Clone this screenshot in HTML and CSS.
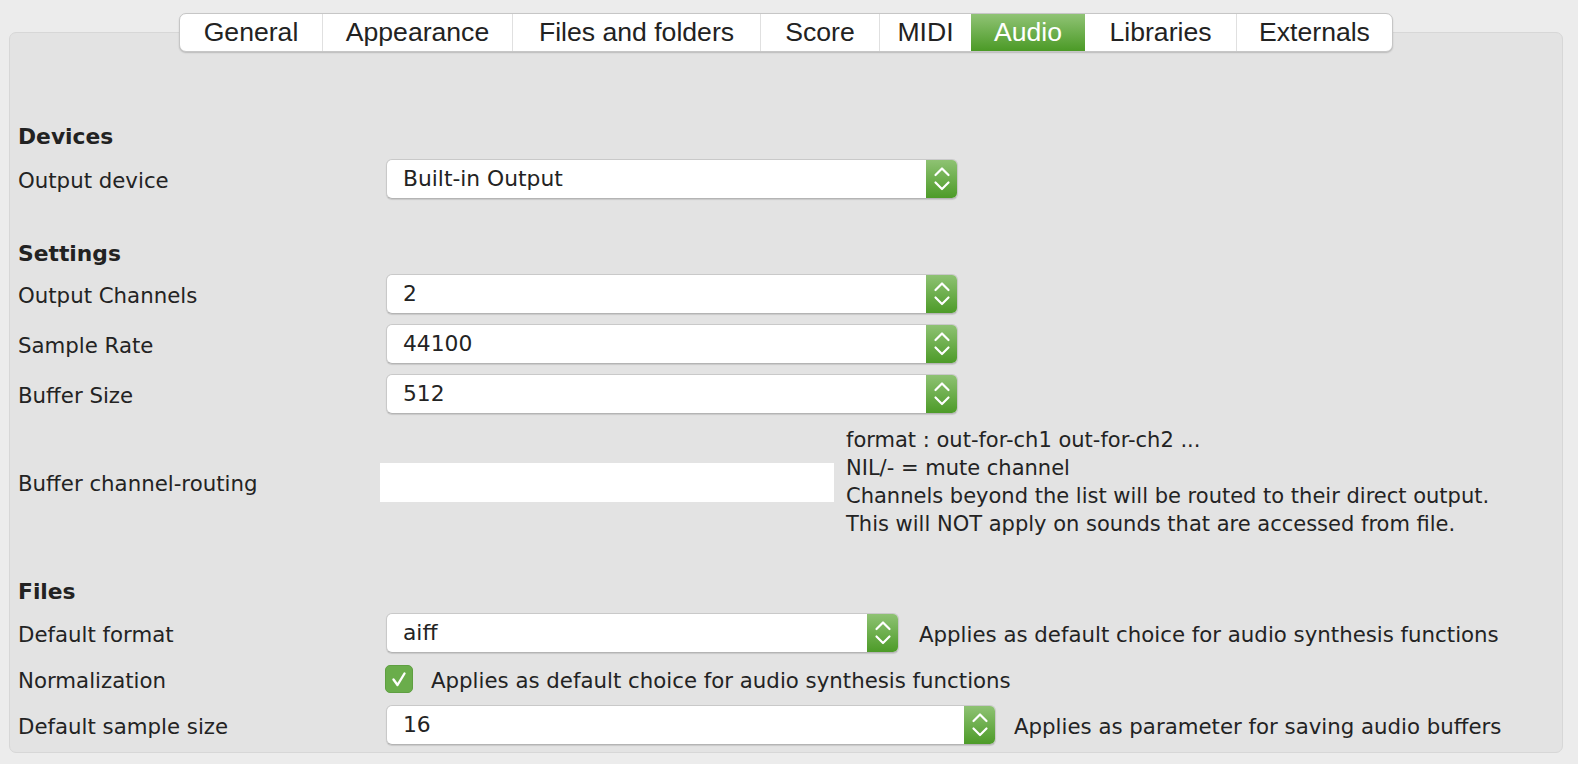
FILE: index.html
```html
<!DOCTYPE html>
<html>
<head>
<meta charset="utf-8">
<link rel="stylesheet" href="styles.css">
</head>
<body>
<div class="tabs-wrap">
  <div class="tabs">
    <div class="tab t-general">General</div>
    <div class="tab t-appearance">Appearance</div>
    <div class="tab t-files">Files and folders</div>
    <div class="tab t-score">Score</div>
    <div class="tab t-midi">MIDI</div>
    <div class="tab t-audio active">Audio</div>
    <div class="tab t-libraries">Libraries</div>
    <div class="tab t-externals">Externals</div>
  </div>
</div>
<div class="panel">
  <div class="heading h-devices">Devices</div>
  <div class="row">
    <div class="label">Output device</div>
    <div class="popup w-full"><span class="popup-text">Built-in Output</span><span class="popup-btn"><svg viewBox="0 0 32 40" width="32" height="40"><polyline points="9.5,16 16,9.5 22.5,16"/><polyline points="9.5,23.5 16,30 22.5,23.5"/></svg></span></div>
  </div>

  <div class="heading h-settings">Settings</div>
  <div class="rows">
    <div class="row">
      <div class="label">Output Channels</div>
      <div class="popup w-full"><span class="popup-text">2</span><span class="popup-btn"><svg viewBox="0 0 32 40" width="32" height="40"><polyline points="9.5,16 16,9.5 22.5,16"/><polyline points="9.5,23.5 16,30 22.5,23.5"/></svg></span></div>
    </div>
    <div class="row">
      <div class="label">Sample Rate</div>
      <div class="popup w-full"><span class="popup-text">44100</span><span class="popup-btn"><svg viewBox="0 0 32 40" width="32" height="40"><polyline points="9.5,16 16,9.5 22.5,16"/><polyline points="9.5,23.5 16,30 22.5,23.5"/></svg></span></div>
    </div>
    <div class="row">
      <div class="label">Buffer Size</div>
      <div class="popup w-full"><span class="popup-text">512</span><span class="popup-btn"><svg viewBox="0 0 32 40" width="32" height="40"><polyline points="9.5,16 16,9.5 22.5,16"/><polyline points="9.5,23.5 16,30 22.5,23.5"/></svg></span></div>
    </div>
  </div>
  <div class="row routing">
    <div class="label">Buffer channel-routing</div>
    <div class="routing-ctl">
      <div class="textfield"></div>
      <div class="desc">
        <div>format : out-for-ch1 out-for-ch2 ...</div>
        <div>NIL/- = mute channel</div>
        <div>Channels beyond the list will be routed to their direct output.</div>
        <div>This will NOT apply on sounds that are accessed from file.</div>
      </div>
    </div>
  </div>

  <div class="heading h-files">Files</div>
  <div class="rows">
    <div class="row">
      <div class="label">Default format</div>
      <div class="ctl-line">
        <div class="popup w-format"><span class="popup-text">aiff</span><span class="popup-btn"><svg viewBox="0 0 32 40" width="32" height="40"><polyline points="9.5,16 16,9.5 22.5,16"/><polyline points="9.5,23.5 16,30 22.5,23.5"/></svg></span></div>
        <span class="note">Applies as default choice for audio synthesis functions</span>
      </div>
    </div>
    <div class="row row-check">
      <div class="label">Normalization</div>
      <div class="ctl-line">
        <span class="checkbox"><svg viewBox="0 0 28 28" width="28" height="28"><path d="M8.5 14.5 L12.5 20 L19.5 8.5"/></svg></span>
        <span class="note note-check">Applies as default choice for audio synthesis functions</span>
      </div>
    </div>
    <div class="row">
      <div class="label">Default sample size</div>
      <div class="ctl-line">
        <div class="popup w-size"><span class="popup-text">16</span><span class="popup-btn"><svg viewBox="0 0 32 40" width="32" height="40"><polyline points="9.5,16 16,9.5 22.5,16"/><polyline points="9.5,23.5 16,30 22.5,23.5"/></svg></span></div>
        <span class="note note-size">Applies as parameter for saving audio buffers</span>
      </div>
    </div>
  </div>
</div>
</body>
</html>
```
FILE: styles.css
```css
html, body {
  margin: 0;
  padding: 0;
}
body {
  background: #ececec;
  padding: 0 15px 0 9px;
  font-family: "DejaVu Sans", "Noto Sans", sans-serif;
  font-size: 21.3px;
  color: #232323;
  height: 764px;
  box-sizing: border-box;
  overflow: hidden;
}

/* Tabs */
.tabs-wrap {
  display: flex;
  justify-content: center;
  padding-top: 13px;
  margin-bottom: -20px;
  position: relative;
  z-index: 2;
}
.tabs {
  display: flex;
  background: #fff;
  border: 1px solid #c6c6c6;
  border-radius: 7px;
  box-shadow: 0 1px 1.5px rgba(0,0,0,0.18);
  overflow: hidden;
  height: 39px;
  box-sizing: border-box;
}
.tab {
  box-sizing: border-box;
  font-family: "Liberation Sans", Arial, sans-serif;
  font-size: 26.6px;
  line-height: 37px;
  text-align: center;
  color: #222;
  border-left: 1px solid #e0e0e0;
  white-space: nowrap;
}
.tab:first-child { border-left: none; }
.t-general { width: 142px; }
.t-appearance { width: 190px; }
.t-files { width: 248px; }
.t-score { width: 119px; }
.t-midi { width: 92px; }
.t-audio { width: 114px; }
.t-libraries { width: 151px; }
.t-externals { width: 156px; }
.tab.active {
  background: linear-gradient(#90c375, #4b9a26);
  color: #fff;
  border-left: none;
}
.tab.active + .tab { border-left: none; }

/* Panel */
.panel {
  background: #e3e3e3;
  border: 1px solid #d7d7d7;
  border-radius: 7px;
  padding: 90px 8px 7px 8px;
  height: 721px;
  box-sizing: border-box;
}
.heading {
  font-weight: bold;
  font-size: 21.8px;
  line-height: 28px;
  color: #222;
}
.h-devices { margin-bottom: 8px; }
.h-settings { margin-top: 41px; margin-bottom: 6px; }
.h-files { margin-top: 40px; margin-bottom: 7px; }

.rows {
  display: flex;
  flex-direction: column;
  gap: 10px;
}
.row {
  display: grid;
  grid-template-columns: 368px 1fr;
  align-items: center;
  min-height: 40px;
}
.row-check { min-height: 32px; }
.label {
  line-height: 28px;
  padding-top: 3px;
  white-space: nowrap;
}

/* Popup */
.popup {
  display: flex;
  align-items: stretch;
  height: 40px;
  box-sizing: border-box;
  background: #fff;
  border: 1px solid #c9c9c9;
  border-bottom-color: #b4b4b4;
  border-radius: 6px;
  box-shadow: 0 1px 1px rgba(0,0,0,0.12);
  overflow: hidden;
}
.w-full { width: 572px; }
.w-format { width: 513px; flex: none; }
.w-size { width: 610px; flex: none; }
.popup-text {
  flex: 1;
  padding-left: 16px;
  font-size: 21.8px;
  line-height: 38px;
  white-space: nowrap;
}
.popup-btn {
  width: 32px;
  flex: none;
  margin: -1px -1px -1px 0;
  background: linear-gradient(#90c375, #4b9a26);
  display: flex;
  align-items: center;
  justify-content: center;
}
.popup-btn svg polyline {
  fill: none;
  stroke: #fff;
  stroke-width: 2.2;
  stroke-linecap: round;
  stroke-linejoin: round;
}

/* Routing */
.routing { margin-top: 12px; }
.routing-ctl {
  display: flex;
  align-items: center;
  margin-left: -6px;
}
.textfield {
  width: 454px;
  height: 39px;
  background: #fff;
  flex: none;
}
.desc {
  margin-left: 12px;
  font-size: 21px;
  line-height: 28px;
  white-space: nowrap;
}

/* Files */
.ctl-line {
  display: flex;
  align-items: center;
}
.note {
  margin-left: 20px;
  padding-top: 2px;
  white-space: nowrap;
}
.note-size { margin-left: 18px; }
.note-check { margin-left: 18px; }
.checkbox {
  width: 28px;
  height: 28px;
  box-sizing: border-box;
  border-radius: 5px;
  background: #6aad4b;
  border: 1px solid #5f9f42;
  margin-left: -1px;
  display: flex;
  align-items: center;
  justify-content: center;
}
.checkbox svg {
  margin: -1px;
}
.checkbox path {
  fill: none;
  stroke: #fff;
  stroke-width: 2.4;
  stroke-linecap: round;
  stroke-linejoin: round;
}
```
